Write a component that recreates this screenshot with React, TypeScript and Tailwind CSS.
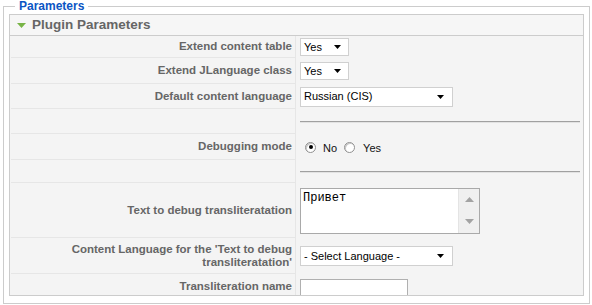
import React from "react";

const Arrow = () => (
  <svg width="7" height="4" viewBox="0 0 7 4">
    <path d="M0 0h7L3.5 4z" fill="#000" />
  </svg>
);

const Select = ({ value, className }: { value: string; className: string }) => (
  <div
    className={`flex items-center justify-between bg-white border border-[#d0d0d0] pl-[3px] text-[11px] text-black ${className}`}
  >
    <span>{value}</span>
    <Arrow />
  </div>
);

const Radio = ({ checked }: { checked?: boolean }) => (
  <span className="flex w-[11px] h-[11px] items-center justify-center rounded-full border border-[#909090] bg-white shadow-[inset_1px_1px_0_#c8c8c8]">
    {checked && <span className="w-[4px] h-[4px] rounded-full bg-black" />}
  </span>
);

const Rule = () => (
  <div className="w-[280px] h-[2px] border-t border-[#a0a0a0] border-b border-b-[#e2e2e2]" />
);

const Row = ({
  label,
  height,
  align = "items-center",
  children,
}: {
  label?: React.ReactNode;
  height: string;
  align?: string;
  children?: React.ReactNode;
}) => (
  <div className={`flex ${height}`}>
    <div className="ml-px w-[285px] shrink-0 flex items-center justify-end pr-[3px] text-right border-b border-r border-[#e6e6e6] text-[11.5px] leading-[13px] font-bold text-[#666]">
      {label}
    </div>
    <div className={`flex-1 flex pl-1 ${align}`}>{children}</div>
  </div>
);

export default function App() {
  return (
    <div className="w-[592px] h-[305px] bg-white font-['Liberation_Sans',Arial,sans-serif]">
      <fieldset className="ml-[3px] w-[587px] border border-[#cccccc] px-[5px] pt-[1px] pb-[7px]">
        <legend className="ml-[6px] px-1 text-[12px] leading-[13px] font-bold text-[#0b55c4]">
          Parameters
        </legend>
        <div className="h-[282px] overflow-hidden border border-[#cccccc] bg-[#f4f4f4]">
          <div className="flex items-center h-[21px] pl-[7px] border-b border-[#cccccc] bg-[#f6f6f6]">
            <svg width="9" height="5" viewBox="0 0 9 5">
              <path d="M0 0h9L4.5 5z" fill="#78b446" />
            </svg>
            <span className="ml-[6px] text-[13.5px] font-bold text-[#666]">Plugin Parameters</span>
          </div>

          <Row label="Extend content table" height="h-[22px]">
            <Select value="Yes" className="w-[49px] h-[18px] pr-[7px]" />
          </Row>
          <Row label="Extend JLanguage class" height="h-[26px]">
            <Select value="Yes" className="w-[49px] h-[18px] pr-[7px]" />
          </Row>
          <Row label="Default content language" height="h-[25px]">
            <Select value="Russian (CIS)" className="w-[153px] h-[20px] pr-[8px]" />
          </Row>
          <Row height="h-[25px]">
            <Rule />
          </Row>
          <Row label="Debugging mode" height="h-[26px]">
            <div className="flex items-center ml-[5px] text-[11px] text-[#111]">
              <Radio checked />
              <span className="ml-[7px] mt-[2px]">No</span>
              <span className="ml-[7px]">
                <Radio />
              </span>
              <span className="ml-[8px] mt-[2px]">Yes</span>
            </div>
          </Row>
          <Row height="h-[23px]">
            <Rule />
          </Row>
          <Row label="Text to debug transliteratation" height="h-[55px]">
            <div className="flex w-[180px] h-[46px] bg-white border border-[#a9a9a9]">
              <div className="flex-1 pl-[2px] pt-[2px] font-['Liberation_Mono','Courier_New',monospace] text-[12px] leading-[14px] text-black">
                Привет
              </div>
              <div className="w-[21px] flex flex-col items-center justify-between pt-[8px] pb-[9px] bg-[#f0f0f0] border-l border-[#e4e4e4]">
                <svg width="9" height="5" viewBox="0 0 9 5">
                  <path d="M4.5 0L9 5H0z" fill="#a3a3a3" />
                </svg>
                <svg width="9" height="5" viewBox="0 0 9 5">
                  <path d="M0 0h9L4.5 5z" fill="#a3a3a3" />
                </svg>
              </div>
            </div>
          </Row>
          <Row
            label={
              <span>
                Content Language for the 'Text to debug
                <br />
                transliteratation'
              </span>
            }
            height="h-[36px]"
          >
            <Select value="- Select Language -" className="w-[153px] h-[20px] pr-[8px]" />
          </Row>
          <Row label="Transliteration name" height="h-[26px]" align="items-start pt-[5px]">
            <div className="w-[108px] h-[20px] bg-white border border-[#b0b0b0]" />
          </Row>
        </div>
      </fieldset>
    </div>
  );
}
